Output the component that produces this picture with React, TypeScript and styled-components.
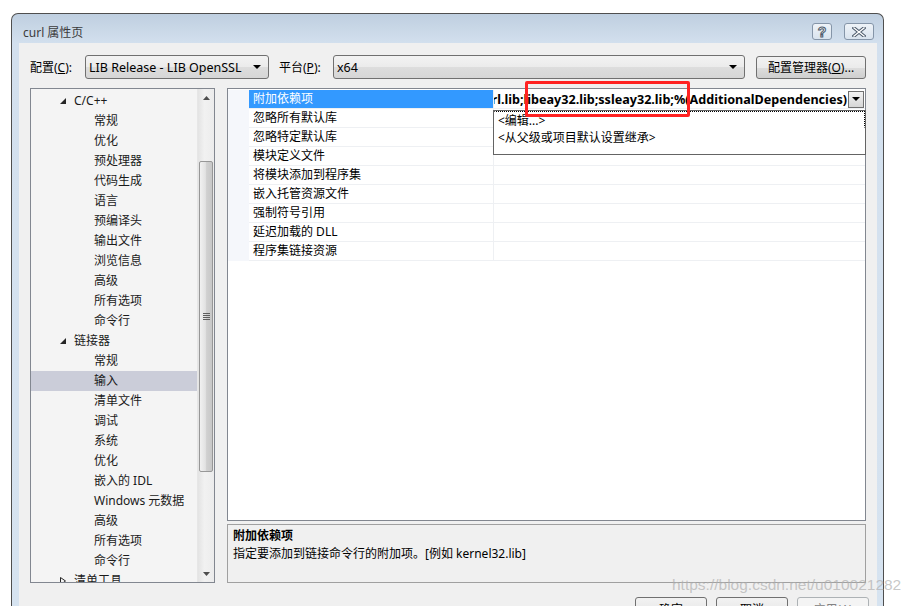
import styled, { createGlobalStyle } from "styled-components";

const GlobalStyle = createGlobalStyle`
  html, body {
    margin: 0;
    padding: 0;
    background: #fff;
    overflow: hidden;
  }
  body {
    font-family: "Noto Sans", "Noto Sans CJK SC", sans-serif;
    font-size: 12px;
    color: #000;
  }
  * {
    box-sizing: border-box;
  }
`;

const treeItems = [
  { label: "C/C++", depth: 0, open: true },
  { label: "常规", depth: 1 },
  { label: "优化", depth: 1 },
  { label: "预处理器", depth: 1 },
  { label: "代码生成", depth: 1 },
  { label: "语言", depth: 1 },
  { label: "预编译头", depth: 1 },
  { label: "输出文件", depth: 1 },
  { label: "浏览信息", depth: 1 },
  { label: "高级", depth: 1 },
  { label: "所有选项", depth: 1 },
  { label: "命令行", depth: 1 },
  { label: "链接器", depth: 0, open: true },
  { label: "常规", depth: 1 },
  { label: "输入", depth: 1, selected: true },
  { label: "清单文件", depth: 1 },
  { label: "调试", depth: 1 },
  { label: "系统", depth: 1 },
  { label: "优化", depth: 1 },
  { label: "嵌入的 IDL", depth: 1 },
  { label: "Windows 元数据", depth: 1 },
  { label: "高级", depth: 1 },
  { label: "所有选项", depth: 1 },
  { label: "命令行", depth: 1 },
  { label: "清单工具", depth: 0, open: false },
];

const props = [
  "附加依赖项",
  "忽略所有默认库",
  "忽略特定默认库",
  "模块定义文件",
  "将模块添加到程序集",
  "嵌入托管资源文件",
  "强制符号引用",
  "延迟加载的 DLL",
  "程序集链接资源",
];

function App() {
  return (
    <Page>
      <GlobalStyle />
      <Window>
        <TitleBar>
          <Title>curl 属性页</Title>
          <CaptionButton $w={20}>
            <HelpGlyph>?</HelpGlyph>
          </CaptionButton>
          <CaptionButton $w={30} $gap={12}>
            <svg width="14" height="10" viewBox="0 0 14 10">
              <path d="M2 1 L12 9 M12 1 L2 9" stroke="#4d5b6c" strokeWidth="3.4" strokeLinecap="square" />
              <path d="M2 1 L12 9 M12 1 L2 9" stroke="#fff" strokeWidth="1.4" strokeLinecap="square" />
            </svg>
          </CaptionButton>
        </TitleBar>
        <Client>
          <Toolbar>
            <Label>
              配置(<u>C</u>):
            </Label>
            <Select $w={184}>
              <SelectText>LIB Release - LIB OpenSSL</SelectText>
              <Arrow />
            </Select>
            <Label $ml={10} $w={54}>
              平台(<u>P</u>):
            </Label>
            <Select $w={412}>
              <SelectText>x64</SelectText>
              <Arrow />
            </Select>
            <PushButton $w={110} $ml={11}>
              配置管理器(<u>O</u>)...
            </PushButton>
          </Toolbar>

          <Main>
            <TreePanel>
              <TreeList>
                {treeItems.map((it, i) => (
                  <TreeRow key={i} $depth={it.depth} $selected={!!it.selected}>
                    {it.depth === 0 && (
                      <Expander>
                        {it.open ? (
                          <svg width="6" height="6" viewBox="0 0 6 6">
                            <polygon points="6,0 6,6 0,6" fill="#262626" />
                          </svg>
                        ) : (
                          <svg width="6" height="8" viewBox="0 0 6 8">
                            <polygon points="0.5,0.5 5.5,4 0.5,7.5" fill="none" stroke="#262626" />
                          </svg>
                        )}
                      </Expander>
                    )}
                    {it.label}
                  </TreeRow>
                ))}
              </TreeList>
              <ScrollBar>
                <ScrollArrow>
                  <svg width="7" height="4" viewBox="0 0 7 4">
                    <polygon points="0,4 3.5,0 7,4" fill="#4d4d4d" />
                  </svg>
                </ScrollArrow>
                <Track>
                  <Thumb $top={55} $h={311}>
                    <Grip />
                  </Thumb>
                </Track>
                <ScrollArrow>
                  <svg width="7" height="4" viewBox="0 0 7 4">
                    <polygon points="0,0 7,0 3.5,4" fill="#4d4d4d" />
                  </svg>
                </ScrollArrow>
              </ScrollBar>
            </TreePanel>

            <RightColumn>
              <GridPanel>
                {props.map((name, i) => (
                  <GridRow key={i}>
                    <MarginCell />
                    <NameCell $selected={i === 0}>{name}</NameCell>
                    <ValueCell>
                      {i === 0 && (
                        <>
                          <ValueText>
                            <b>curl.lib;libeay32.lib;ssleay32.lib;%(AdditionalDependencies)</b>
                          </ValueText>
                          <DropButton>
                            <Arrow />
                          </DropButton>
                          <Popup>
                            <PopupItem $focused>&lt;编辑...&gt;</PopupItem>
                            <PopupItem>&lt;从父级或项目默认设置继承&gt;</PopupItem>
                          </Popup>
                          <Highlight />
                        </>
                      )}
                    </ValueCell>
                  </GridRow>
                ))}
              </GridPanel>
              <Description>
                <DescTitle>附加依赖项</DescTitle>
                <div>指定要添加到链接命令行的附加项。[例如 kernel32.lib]</div>
              </Description>
            </RightColumn>
          </Main>

          <ButtonRow>
            <PushButton $w={72} $h={23}>确定</PushButton>
            <PushButton $w={72} $h={23}>取消</PushButton>
            <PushButton $w={72} $h={23} $disabled>
              应用(A)
            </PushButton>
          </ButtonRow>
        </Client>
      </Window>
      <Watermark>https://blog.csdn.net/u010021282</Watermark>
    </Page>
  );
}
export default App;

const Page = styled.div`
  position: relative;
  width: 917px;
  height: 606px;
  padding: 13px 0 0 11px;
  overflow: hidden;
`;

const Window = styled.div`
  width: 873px;
  height: 600px;
  border: 1px solid #4f4f4f;
  border-bottom: none;
  border-radius: 7px 7px 0 0;
  background: linear-gradient(#bfcfe0 0px, #d3e0ee 30px, #d6e3f0 100%);
  padding: 0 6px 0 7px;
  display: flex;
  flex-direction: column;
`;

const TitleBar = styled.div`
  height: 29px;
  display: flex;
  align-items: flex-start;
  padding-top: 9px;
  flex-shrink: 0;
`;

const Title = styled.div`
  flex: 1;
  margin-left: 4px;
  margin-top: 2px;
  color: #3c3c3c;
  font-size: 12px;
  line-height: 16px;
`;

const CaptionButton = styled.div<{ $w: number; $gap?: number }>`
  width: ${(p) => p.$w}px;
  height: 17px;
  margin-left: ${(p) => p.$gap ?? 0}px;
  margin-right: ${(p) => (p.$gap ? 3 : 0)}px;
  border: 1px solid #8595a8;
  border-radius: 3px;
  background: linear-gradient(#eef3f8, #d9e3ee);
  display: flex;
  align-items: center;
  justify-content: center;
`;

const HelpGlyph = styled.span`
  font-family: "Liberation Sans", sans-serif;
  font-weight: bold;
  font-size: 14px;
  line-height: 14px;
  color: #fff;
  -webkit-text-stroke: 1px #4d5b6c;
`;

const Client = styled.div`
  flex: 1;
  background: #f0f0f0;
  padding: 12px 11px 0 11px;
`;

const Toolbar = styled.div`
  display: flex;
  align-items: center;
  height: 24px;
`;

const Label = styled.div<{ $ml?: number; $w?: number }>`
  width: ${(p) => p.$w ?? 55}px;
  margin-left: ${(p) => p.$ml ?? 0}px;
  white-space: nowrap;
`;

const Select = styled.div<{ $w: number }>`
  width: ${(p) => p.$w}px;
  height: 24px;
  border: 1px solid #707070;
  border-radius: 3px;
  background: linear-gradient(#f3f3f3 0%, #ebebeb 50%, #dddddd 51%, #d6d6d6 100%);
  display: flex;
  align-items: center;
  padding: 0 7px 0 3px;
  justify-content: space-between;
  white-space: nowrap;
`;

const SelectText = styled.span`
  font-size: 12.5px;
`;

const Arrow = styled.span`
  width: 0;
  height: 0;
  border-left: 4px solid transparent;
  border-right: 4px solid transparent;
  border-top: 4px solid #000;
`;

const PushButton = styled.div<{ $w: number; $h?: number; $ml?: number; $disabled?: boolean }>`
  width: ${(p) => p.$w}px;
  height: ${(p) => p.$h ?? 23}px;
  margin-left: ${(p) => p.$ml ?? 0}px;
  border: 1px solid ${(p) => (p.$disabled ? "#adb2b5" : "#707070")};
  border-radius: 3px;
  background: ${(p) =>
    p.$disabled ? "#f4f4f4" : "linear-gradient(#f2f2f2 0%, #ebebeb 50%, #dddddd 51%, #cfcfcf 100%)"};
  color: ${(p) => (p.$disabled ? "#838383" : "#000")};
  display: flex;
  align-items: center;
  justify-content: center;
  white-space: nowrap;
`;

const Main = styled.div`
  display: flex;
  gap: 12px;
  margin-top: 9px;
  height: 495px;
`;

const TreePanel = styled.div`
  width: 185px;
  border: 1px solid #828790;
  background: #f4f4f4;
  display: flex;
  overflow: hidden;
`;

const TreeList = styled.div`
  flex: 1;
  padding-top: 2px;
  overflow: hidden;
`;

const TreeRow = styled.div<{ $depth: number; $selected: boolean }>`
  height: 20px;
  line-height: 20px;
  display: flex;
  align-items: center;
  padding-left: ${(p) => (p.$depth === 0 ? 29 : 63)}px;
  background: ${(p) => (p.$selected ? "#cbcdd9" : "transparent")};
  white-space: nowrap;
  color: #1a1a1a;
`;

const Expander = styled.span`
  width: 14px;
  display: flex;
  align-items: center;
`;

const ScrollBar = styled.div`
  width: 17px;
  display: flex;
  flex-direction: column;
  background: linear-gradient(to right, #e3e3e3, #f1f1f1 40%, #ececec);
  border-left: 1px solid #e6e6e6;
`;

const ScrollArrow = styled.div`
  height: 17px;
  display: flex;
  align-items: center;
  justify-content: center;
`;

const Track = styled.div`
  flex: 1;
  padding: 0 1px;
`;

const Thumb = styled.div<{ $top: number; $h: number }>`
  margin-top: ${(p) => p.$top}px;
  height: ${(p) => p.$h}px;
  border: 1px solid #979797;
  border-radius: 2px;
  background: linear-gradient(to right, #f1f1f1, #e2e2e2 45%, #d0d0d0 55%, #c8c8c8);
  display: flex;
  align-items: center;
  justify-content: center;
`;

const Grip = styled.div`
  width: 7px;
  height: 7px;
  background: repeating-linear-gradient(#5f5f5f 0 1px, transparent 1px 2px);
`;

const RightColumn = styled.div`
  width: 639px;
  display: flex;
  flex-direction: column;
  gap: 3px;
`;

const GridPanel = styled.div`
  height: 433px;
  border: 1px solid #828790;
  background: #fff;
  padding-top: 1px;
  position: relative;
`;

const GridRow = styled.div`
  display: grid;
  grid-template-columns: 21px 245px minmax(0, 1fr);
  height: 19px;
`;

const MarginCell = styled.div`
  background: #f5f7fb;
`;

const NameCell = styled.div<{ $selected: boolean }>`
  padding-left: 4px;
  line-height: 18px;
  border-bottom: 1px solid #eef0f3;
  border-right: 1px solid #eef0f3;
  background: ${(p) => (p.$selected ? "#3399ff" : "#fff")};
  color: ${(p) => (p.$selected ? "#fff" : "#000")};
  white-space: nowrap;
`;

const ValueCell = styled.div`
  position: relative;
  display: flex;
  align-items: center;
  border-bottom: 1px solid #eef0f3;
  padding-right: 1px;
  min-width: 0;
`;

const ValueText = styled.div`
  flex: 1;
  min-width: 0;
  display: flex;
  justify-content: flex-end;
  overflow: hidden;
  white-space: nowrap;
  font-size: 12.6px;
  padding-right: 1px;
`;

const DropButton = styled.div`
  flex-shrink: 0;
  width: 16px;
  height: 17px;
  border: 1px solid #707070;
  background: linear-gradient(#f2f2f2, #d6d6d6);
  display: flex;
  align-items: center;
  justify-content: center;
`;

const Popup = styled.div`
  position: absolute;
  left: -1px;
  top: 20px;
  width: 373px;
  height: 45px;
  background: #fff;
  border: 1px solid #646464;
  z-index: 2;
`;

const PopupItem = styled.div<{ $focused?: boolean }>`
  height: 17px;
  line-height: 17px;
  padding-left: 3px;
  border: 1px dotted ${(p) => (p.$focused ? "#000" : "transparent")};
  border-left-color: transparent;
  border-bottom-color: transparent;
  white-space: nowrap;
`;

const Highlight = styled.div`
  position: absolute;
  left: 31px;
  top: -9px;
  width: 165px;
  height: 36px;
  border: 3px solid #ff2222;
  border-radius: 2px;
  z-index: 3;
`;

const Description = styled.div`
  height: 59px;
  border: 1px solid #a0a0a0;
  background: #f0f0f0;
  padding: 2px 5px;
  line-height: 18px;
`;

const DescTitle = styled.div`
  font-weight: bold;
`;

const ButtonRow = styled.div`
  display: flex;
  justify-content: flex-end;
  gap: 9px;
  margin-top: 14px;
  margin-right: -3px;
`;

const Watermark = styled.div`
  position: absolute;
  left: 672px;
  top: 576px;
  font-family: "Liberation Sans", sans-serif;
  font-size: 15.5px;
  color: rgba(175, 175, 175, 0.7);
  white-space: nowrap;
  pointer-events: none;
`;
